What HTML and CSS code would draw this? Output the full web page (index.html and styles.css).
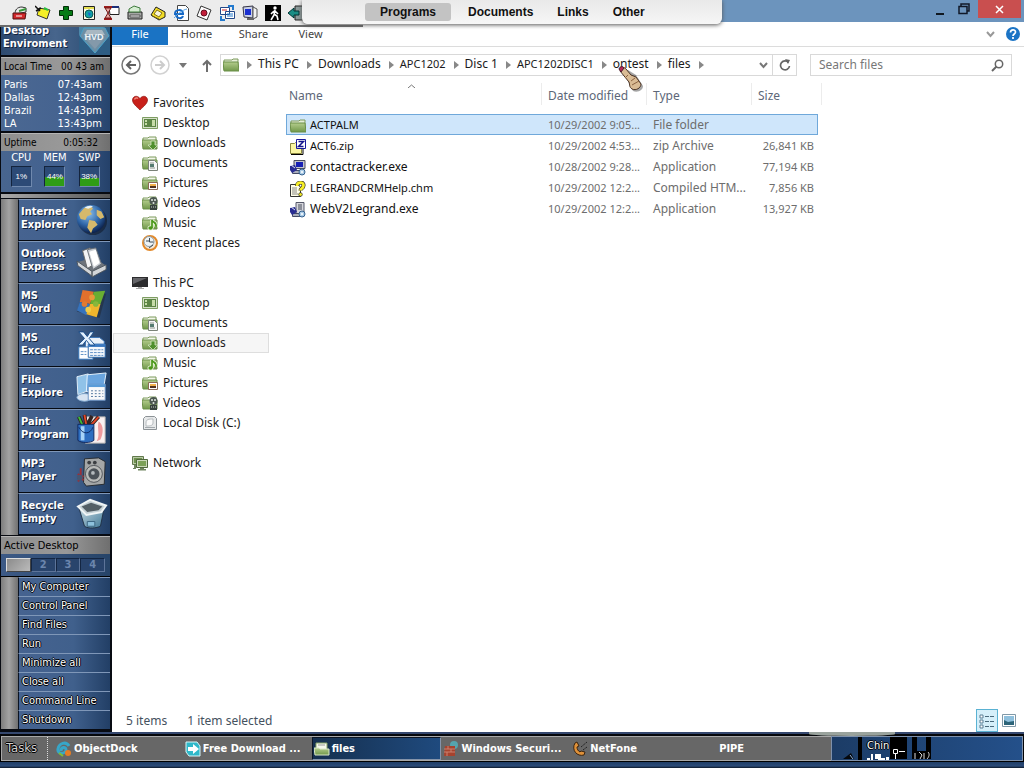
FILE: index.html
```html
<!DOCTYPE html>
<html lang="en">
<head>
	<meta charset="UTF-8">
	<title>files</title>
	<link rel="stylesheet" href="styles.css">
</head>
<body>
	<!-- shared icons -->
	<svg class="defs" aria-hidden="true">
		<defs>
			<linearGradient id="green" x1="0" y1="0" x2="0" y2="1"><stop offset="0" stop-color="#b3cc8c"/><stop offset="1" stop-color="#71984a"/></linearGradient>
			<linearGradient id="steel" x1="0" y1="0" x2="1" y2="1"><stop offset="0" stop-color="#c8dbe4"/><stop offset="1" stop-color="#3f7896"/></linearGradient>
			<radialGradient id="sea" cx=".4" cy=".3" r=".7"><stop offset="0" stop-color="#8fc4ee"/><stop offset=".6" stop-color="#2f66a8"/><stop offset="1" stop-color="#0d2450"/></radialGradient>
		</defs>
		<symbol id="i-folder" viewBox="0 0 16 16"><path d="M1 3h8l1-1h5v11H1z" fill="#e6efd8" stroke="#7c9a5c"/><path d="M0 5h15l1 9H1z" fill="url(#green)" stroke="#6b8f48"/></symbol>
		<symbol id="i-base" viewBox="0 0 16 16"><path d="M1 3h5l1-1h7v4H1z" fill="#f2f6ea" stroke="#7c9a5c"/><path d="M0 5h15v9H1z" fill="url(#green)" stroke="#6b8f48"/></symbol>
		<symbol id="i-desktop" viewBox="0 0 16 16"><path d="M.5 2.500h15v11H.5z" fill="#d5e0c8" stroke="#7e9d62"/><path d="M2 4h12v8H2z" fill="#5d8545"/><path d="M3 5h2v2H3zM3 8h2v2H3zM10 5h3v6h-3z" fill="#c7dca8"/></symbol>
		<symbol id="i-downloads" viewBox="0 0 16 16"><use href="#i-base"/><path d="M9 6h4v4h3l-5 5-5-5h3z" fill="#4f8f2c" stroke="#d7e8c4" stroke-width=".8"/></symbol>
		<symbol id="i-documents" viewBox="0 0 16 16"><use href="#i-base"/><path d="M6.500 5.500h6l3 3v7h-9z" fill="#f7f7f7" stroke="#7a8278"/><path d="M8 8h4M8 13h5" stroke="#8a938a"/><path d="M8 9h4v3H8z" fill="#557a70"/></symbol>
		<symbol id="i-pictures" viewBox="0 0 16 16"><use href="#i-base"/><path d="M6.500 7.500h9v7h-9z" fill="#fff" stroke="#8a6b55"/><path d="M8 9h6v2H8z" fill="#f1b04a"/><path d="M8 11h6v2H8z" fill="#50311f"/></symbol>
		<symbol id="i-videos" viewBox="0 0 16 16"><use href="#i-base"/><circle cx="11.500" cy="6" r="4" fill="#4b5750"/><circle cx="10" cy="5" r="1" fill="#dfe5df"/><circle cx="13" cy="5" r="1" fill="#dfe5df"/><circle cx="11.500" cy="8" r="1" fill="#dfe5df"/><path d="M8 10h7v5H8z" fill="#37423c"/><path d="M9 12h5" stroke="#c5d0c5" stroke-dasharray="1 1"/></symbol>
		<symbol id="i-music" viewBox="0 0 16 16"><use href="#i-base"/><path d="M10 5c1 3 5 2 4 7M10 5v8" fill="none" stroke="#eaf5dc" stroke-width="3.500"/><ellipse cx="8.500" cy="13" rx="3" ry="2.500" fill="#eaf5dc"/><path d="M10 5c1 3 5 2 4 7M10 5v8" fill="none" stroke="#4a981a" stroke-width="1.700"/><ellipse cx="8.500" cy="13" rx="2.200" ry="1.700" fill="#4a981a"/></symbol>
		<symbol id="i-recent" viewBox="0 0 16 16"><circle cx="8" cy="8" r="7" fill="#f4e9d9" stroke="#e2892a" stroke-width="2"/><circle cx="7" cy="6.500" r="5" fill="#eef3f5" stroke="#8b9ba5"/><path d="M7.500 3v4h4M11 10l-4 3M4 6h3" stroke="#3c4a55" fill="none"/></symbol>
		<symbol id="i-pc" viewBox="0 0 16 16"><path d="M0 2h16v10H0z" fill="#2c2c2e"/><path d="M1 3h14L1 9z" fill="#66666a"/><path d="M6 12h4v1h2v1H4v-1h2z" fill="#aaa"/></symbol>
		<symbol id="i-heart" viewBox="0 0 16 16"><path d="M8 15C4 11 .5 8.500.5 5S5-.5 8 3.500C11-.5 15.500 1.500 15.500 5S12 11 8 15z" fill="#c8201a" stroke="#8f1712" stroke-width=".7"/><path d="M2.500 4.500C3 3 5 2.500 6 3.500" stroke="#f08a7c" fill="none" stroke-width="1.500"/></symbol>
		<symbol id="i-disk" viewBox="0 0 16 16"><path d="M1.500 3.500l2-2h9l2 2v11h-13z" fill="#e6e8e9" stroke="#8c9296"/><path d="M4 8c0-4 3-4 7-4v4c0 3-4 3-7 3z" fill="#fafafa" stroke="#b6bbbe"/><path d="M3 12.500h10" stroke="#a2a8ac"/></symbol>
		<symbol id="i-network" viewBox="0 0 16 16"><path d="M.5 1.500h11v8H.5z" fill="#b9c9a6" stroke="#61794c"/><path d="M2 3h8v5H2z" fill="#6f9150"/><path d="M2 10h2v4H1v-1h1z" fill="#708560"/><path d="M4.500 4.500h11v8h-11z" fill="#cbd8ba" stroke="#4f683c"/><path d="M6 6h8v5H6z" fill="#7ca158"/><path d="M8 13h4v1h2v1.500H6V14h2z" fill="#708560"/></symbol>
		<symbol id="i-zip" viewBox="0 0 16 16"><path d="M.5 4.500h4l1-1h6v11H.5z" fill="#fbf7a2" stroke="#8b8740"/><path d="M1 15.500h12v-7" stroke="#000" fill="none"/><path d="M6.500.5h9v9h-9z" fill="#fff" stroke="#1a1a9c"/><path d="M8.500 2.500h5l-5 5h5" fill="none" stroke="#14148c" stroke-width="1.500"/></symbol>
		<symbol id="i-setup" viewBox="0 0 16 16"><path d="M4 .5h11v8H4z" fill="#c4c6ce" stroke="#4c4f60"/><path d="M6 2h7v5H6z" fill="#1720b4"/><path d="M2.500 10.500h9v3h-9z" fill="#aaaebc" stroke="#444a66"/><path d="M0 6l5-1 2 5-5 3-2-3z" fill="#292d92"/><path d="M1 5l4 3" stroke="#dadff5"/><circle cx="12" cy="12" r="3" fill="#aacbe6" stroke="#35618f"/><circle cx="12" cy="12" r="1" fill="#fff"/></symbol>
		<symbol id="i-setup2" viewBox="0 0 16 16"><path d="M6 .5h8v11H6z" fill="#d6d6dc" stroke="#55586a"/><path d="M8 3h4M8 5h4M8 7h4" stroke="#444a58"/><path d="M2.500 11.500h8v3h-8z" fill="#aaaebc" stroke="#444a66"/><path d="M0 6l5-1 2 5-5 3-2-3z" fill="#292d92"/><path d="M1 5l4 3" stroke="#dadff5"/><circle cx="12" cy="12" r="3" fill="#aacbe6" stroke="#35618f"/><circle cx="12" cy="12" r="1" fill="#fff"/></symbol>
		<symbol id="i-help" viewBox="0 0 16 16"><path d="M.5 3.500h8l2 3v9H.5z" fill="#fffde8" stroke="#333"/><path d="M2 7h5M2 9h5M2 11h5M2 13h6" stroke="#888"/><path d="M7 5c0-4.500 7-4.500 6.500-.500 0 3-3 2.500-3 5" fill="none" stroke="#222" stroke-width="4"/><path d="M7 5c0-4.500 7-4.500 6.500-.500 0 3-3 2.500-3 5" fill="none" stroke="#f7ee27" stroke-width="2.800"/><circle cx="10.500" cy="13.500" r="1.800" fill="#f7ee27" stroke="#222" stroke-width=".7"/></symbol>
		<symbol id="i-arrow" viewBox="0 0 5 8"><path d="M0 0l5 4-5 4z" fill="#888"/></symbol>
		<symbol id="i-chevron" viewBox="0 0 9 7"><path d="M1 1l3.500 4L8 1" fill="none" stroke="currentColor" stroke-width="2"/></symbol>
	</svg>

	<div class="desktop">
		<aside class="panel">
			<header class="brand">
				<h1>Desktop<br>Enviroment</h1>
				<svg width="31" height="31" viewBox="0 0 31 31"><path d="M0 0h31v31H0z" fill="#2e5d84"/><path d="M0 0h31L24 4H6L0 12z" fill="#4d88aa"/><path d="M5 4h21l4 8-14 17L1 12z" fill="#6d8fa5" stroke="#4aa2c8"/><path d="M8 6h15l3 5H5z" fill="#a9b8c2"/><path d="M6 14h19l-9 11z" fill="#8499aa"/><text x="15" y="16" text-anchor="middle" class="hvd">HVD</text></svg>
			</header>
			<div class="bar"><span>Local Time</span><span>00 43 am</span></div>
			<dl class="clocks">
				<dt>Paris</dt><dd>07:43am</dd>
				<dt>Dallas</dt><dd>12:43pm</dd>
				<dt>Brazil</dt><dd>14:43pm</dd>
				<dt>LA</dt><dd>13:43pm</dd>
			</dl>
			<div class="bar uptime"><span>Uptime</span><span>0:05:32</span></div>
			<div class="meters">
				<div>CPU<b>1%</b></div>
				<div>MEM<b class="half">44%</b></div>
				<div>SWP<b class="third">38%</b></div>
			</div>
			<div class="strip"></div>
			<nav class="launch">
				<button>Internet<br>Explorer
					<svg viewBox="0 0 34 34"><circle cx="18" cy="18" r="15" fill="#101b2c" opacity=".6"/><circle cx="16" cy="16" r="15" fill="url(#sea)"/><path d="M8 5c5-4 9-2 10 0l-3 3 2 3-5 2-2 4-5-1-2-5zM14 17l6 1 3 4-5 4-2 5-4-6zM22 6l5 2 3 6-4 2-4-4z" fill="#d5b96c"/><path d="M9 4c3-2 7-3 9-1l-5 2z" fill="#e8f1f5"/></svg>
				</button>
				<button>Outlook<br>Express
					<svg viewBox="0 0 34 34"><path d="M2 17L19 12l13 9-16 11z" fill="#6d737b"/><path d="M7 5l8-3 5 17-8 5z" fill="#f3f4f5" stroke="#666"/><path d="M12 4l9-2 6 17-9 6z" fill="#c9cdd2" stroke="#6a7078"/><path d="M14 6l7-2 4 14-6 4z" fill="#fff"/><path d="M1 16l16 11v5L2 21zM17 27l15-7v5L17 33z" fill="#d2d5d8" stroke="#4e555d"/></svg>
				</button>
				<button>MS<br>Word
					<svg viewBox="0 0 34 34"><path d="M8 3l24 3-7 26L1 25z" fill="#222c38" opacity=".6"/><path d="M7 2l12 2-4 13-11-2z" fill="#e2702d"/><path d="M19 4l12-1-5 14-11 0z" fill="#69ae32"/><path d="M4 15l11 2-4 12L1 24z" fill="#3673bd"/><path d="M15 17h11l-4 14-11-3z" fill="#efb52d"/><circle cx="17" cy="10" r="3" fill="#e99a3a"/><circle cx="9" cy="17" r="3" fill="#e37a31"/><circle cx="21" cy="17" r="3" fill="#87b63c"/><circle cx="13" cy="23" r="3" fill="#f1cb4a"/></svg>
				</button>
				<button>MS<br>Excel
					<svg viewBox="0 0 34 34"><path d="M10 8h15l5 4v14H10z" fill="#eaf1f9" stroke="#3873b8"/><path d="M3 18h15v13H3z" fill="#fff" stroke="#3578bd"/><path d="M13 15h18v14H13z" fill="#f5f8fc" stroke="#2863a5"/><path d="M13 15h18v3H13z" fill="#3978c0"/><path d="M15 21h14M15 24h14M15 27h14M5 23h6M5 26h6" stroke="#578bc3" stroke-dasharray="3 1"/><path d="M3 2h5l4 5 3-5h4l-5 7 6 7h-5l-4-5-4 5H2l7-7z" fill="#e3f1ff" stroke="#164b87"/></svg>
				</button>
				<button>File<br>Explore
					<svg viewBox="0 0 34 34"><path d="M1 5l12-3v18L2 24z" fill="#90c2e8" stroke="#e5f1fa"/><path d="M12 3l20-2-3 18-18 2z" fill="#6aa5df" stroke="#eaf5ff"/><ellipse cx="9" cy="27" rx="8" ry="4" fill="#d9e4f2" stroke="#8db5da"/><path d="M13 13h18v17H13z" fill="#f9f9fa" stroke="#6c94c5"/><path d="M13 13h18v3H13z" fill="#5b9cd8"/><path d="M16 20h13M16 23h13M16 26h13" stroke="#4a709b" stroke-dasharray="2 2"/></svg>
				</button>
				<button>Paint<br>Program
					<svg viewBox="0 0 34 34"><path d="M10 3h21v28H10z" fill="#f8f0f0" stroke="#aaa"/><path d="M24 8c6 4 5 13 2 19l-4 2c4-7 0-13 2-21z" fill="#ee9a9d"/><path d="M3 3l4 9M9 1l2 11M17 2l-5 10M24 3L14 14" stroke="#312321" stroke-width="4"/><path d="M3 3l4 9" stroke="#3bba38" stroke-width="2"/><path d="M9 1l2 11M24 3L14 14" stroke="#e14528" stroke-width="2"/><path d="M2 11h17v17c-3 3-14 3-17 0z" fill="#2e6ec0" stroke="#10265d"/><path d="M5 13h4v15H5z" fill="#a8d4f8"/><path d="M3 14c4 8 12 8 15 0" fill="none" stroke="#0e2c66"/></svg>
				</button>
				<button>MP3<br>Player
					<svg viewBox="0 0 34 34"><path d="M9 3l15-1 7 4-1 24-19 2-3-4z" fill="#a4a6a6" stroke="#252a2e"/><circle cx="14" cy="7" r="2" fill="#3b3e42"/><circle cx="20" cy="7" r="2" fill="#3b3e42"/><circle cx="19" cy="19" r="9" fill="#b9bab8" stroke="#50545a"/><circle cx="19" cy="19" r="6" fill="#4b5157"/><circle cx="18" cy="18" r="2" fill="#b5babd"/><path d="M5 13v9M2 19l6 7M2 27l6-6" stroke="#9c3037" stroke-width="2"/><circle cx="4" cy="23" r="3" fill="#455773"/></svg>
				</button>
				<button>Recycle<br>Empty
					<svg viewBox="0 0 34 34"><path d="M3 10l6 20c4 3 13 2 17 0l4-20z" fill="url(#steel)" stroke="#203044"/><path d="M2 9l13-7 17 6-5 7-16 3z" fill="#c4d0d5" stroke="#f0f5f6" stroke-width="2"/><path d="M6 9l10-4 12 4-4 4-12 2z" fill="#535f66"/><path d="M12 25h8v5h-8z" fill="#8ec2dd" stroke="#3b6480"/></svg>
				</button>
			</nav>
			<div class="bar active-desktop">Active Desktop</div>
			<div class="pager"><button class="on" aria-label="1"></button><button>2</button><button>3</button><button>4</button></div>
			<nav class="commands">
				<button>My Computer</button>
				<button>Control Panel</button>
				<button>Find Files</button>
				<button>Run</button>
				<button>Minimize all</button>
				<button>Close all</button>
				<button>Command Line</button>
				<button>Shutdown</button>
			</nav>
		</aside>

		<main class="window">
			<div class="titlebar">
				<button aria-label="Minimize"><svg width="10" height="12"><path d="M1 11h8" stroke="#101820" stroke-width="2"/></svg></button>
				<button aria-label="Restore"><svg width="12" height="12"><path d="M3 3V1h8v7H9M1 3.500h8v7H1z" fill="none" stroke="#101828" stroke-width="1.500"/></svg></button>
				<button class="close" aria-label="Close"><svg width="9" height="9"><path d="M1 1l7 7M8 1L1 8" stroke="#fff" stroke-width="1.500"/></svg></button>
			</div>
			<div class="tabs">
				<a class="file" href="#">File</a>
				<a href="#">Home</a>
				<a href="#">Share</a>
				<a href="#">View</a>
				<svg class="fold" width="9" height="7"><use href="#i-chevron"/></svg>
				<svg width="14" height="14" viewBox="0 0 14 14"><circle cx="7" cy="7" r="7" fill="#1b74c5"/><path d="M4.500 5.500c0-3.500 5-3.500 5-.5 0 2-2.500 2-2.500 4M7 10v2" fill="none" stroke="#fff" stroke-width="1.700"/></svg>
			</div>
			<div class="address">
				<button aria-label="Back"><svg width="20" height="20"><circle cx="10" cy="10" r="9" fill="#fff" stroke="#777" stroke-width="1.500"/><path d="M15 10H6M10 6l-4 4 4 4" fill="none" stroke="#606060" stroke-width="2"/></svg></button>
				<button aria-label="Forward"><svg width="20" height="20"><circle cx="10" cy="10" r="9" fill="#fff" stroke="#d2d2d2" stroke-width="1.500"/><path d="M5 10h9M10 6l4 4-4 4" fill="none" stroke="#ccc" stroke-width="2"/></svg></button>
				<button class="recent" aria-label="Recent locations"><svg width="8" height="5"><path d="M0 0h8L4 5z" fill="#777"/></svg></button>
				<button class="up" aria-label="Up"><svg width="10" height="13"><path d="M5 13V2M1 6l4-4 4 4" fill="none" stroke="#6e6e6e" stroke-width="2"/></svg></button>
				<div class="path">
					<svg width="16" height="16"><use href="#i-folder"/></svg>
					<svg class="sep"><use href="#i-arrow"/></svg><a href="#">This PC</a>
					<svg class="sep"><use href="#i-arrow"/></svg><a href="#">Downloads</a>
					<svg class="sep"><use href="#i-arrow"/></svg><a class="caps" href="#">APC1202</a>
					<svg class="sep"><use href="#i-arrow"/></svg><a href="#">Disc 1</a>
					<svg class="sep"><use href="#i-arrow"/></svg><a class="caps" href="#">APC1202DISC1</a>
					<svg class="sep"><use href="#i-arrow"/></svg><a href="#">ontest</a>
					<svg class="sep"><use href="#i-arrow"/></svg><a href="#">files</a>
					<svg class="sep"><use href="#i-arrow"/></svg>
					<button class="drop" aria-label="Previous locations"><svg width="9" height="7"><use href="#i-chevron"/></svg></button>
					<button class="refresh" aria-label="Refresh"><svg width="12" height="12"><path d="M9.500 3.500A4.500 4.500 0 1 0 10.500 7" fill="none" stroke="#666" stroke-width="1.700"/><path d="M6 0l5 1-2 4z" fill="#666"/></svg></button>
				</div>
				<div class="search">
					<input type="text" placeholder="Search files" aria-label="Search files">
					<svg width="13" height="13"><circle cx="8" cy="5" r="3.700" fill="none" stroke="#666" stroke-width="1.500"/><path d="M5.500 7.500L1 12" stroke="#666" stroke-width="2"/></svg>
				</div>
			</div>
			<div class="content">
				<nav class="tree">
					<ul>
						<li class="root"><a href="#"><svg><use href="#i-heart"/></svg>Favorites</a></li>
						<li><a href="#"><svg><use href="#i-desktop"/></svg>Desktop</a></li>
						<li><a href="#"><svg><use href="#i-downloads"/></svg>Downloads</a></li>
						<li><a href="#"><svg><use href="#i-documents"/></svg>Documents</a></li>
						<li><a href="#"><svg><use href="#i-pictures"/></svg>Pictures</a></li>
						<li><a href="#"><svg><use href="#i-videos"/></svg>Videos</a></li>
						<li><a href="#"><svg><use href="#i-music"/></svg>Music</a></li>
						<li><a href="#"><svg><use href="#i-recent"/></svg>Recent places</a></li>
					</ul>
					<ul>
						<li class="root"><a href="#"><svg><use href="#i-pc"/></svg>This PC</a></li>
						<li><a href="#"><svg><use href="#i-desktop"/></svg>Desktop</a></li>
						<li><a href="#"><svg><use href="#i-documents"/></svg>Documents</a></li>
						<li class="selected"><a href="#"><svg><use href="#i-downloads"/></svg>Downloads</a></li>
						<li><a href="#"><svg><use href="#i-music"/></svg>Music</a></li>
						<li><a href="#"><svg><use href="#i-pictures"/></svg>Pictures</a></li>
						<li><a href="#"><svg><use href="#i-videos"/></svg>Videos</a></li>
						<li><a href="#"><svg><use href="#i-disk"/></svg>Local Disk (C:)</a></li>
					</ul>
					<ul>
						<li class="root"><a href="#"><svg><use href="#i-network"/></svg>Network</a></li>
					</ul>
				</nav>
				<div class="list">
					<table>
						<thead>
							<tr>
								<th class="name">Name<svg class="sort" width="7" height="4"><path d="M0 4l3.500-3L7 4" fill="none" stroke="#777"/></svg></th>
								<th class="date">Date modified</th>
								<th class="type">Type</th>
								<th class="size">Size</th>
								<th class="end"></th>
							</tr>
						</thead>
						<tbody>
							<tr class="selected"><td class="caps"><svg><use href="#i-folder"/></svg>ACTPALM</td><td>10/29/2002 9:05...</td><td>File folder</td><td></td></tr>
							<tr><td class="caps"><svg><use href="#i-zip"/></svg>ACT6.zip</td><td>10/29/2002 4:53...</td><td>zip Archive</td><td>26,841 KB</td></tr>
							<tr><td><svg><use href="#i-setup"/></svg>contactracker.exe</td><td>10/28/2002 9:28...</td><td>Application</td><td>77,194 KB</td></tr>
							<tr><td class="caps"><svg><use href="#i-help"/></svg>LEGRANDCRMHelp.chm</td><td>10/29/2002 12:2...</td><td>Compiled HTM...</td><td>7,856 KB</td></tr>
							<tr><td><svg><use href="#i-setup2"/></svg>WebV2Legrand.exe</td><td>10/29/2002 12:2...</td><td>Application</td><td>13,927 KB</td></tr>
						</tbody>
					</table>
				</div>
			</div>
			<footer class="status">
				<span>5 items</span>
				<span>1 item selected</span>
				<button class="view on" aria-label="Details"><svg width="16" height="16"><path d="M1 2h3v3H1zM1 7h3v3H1zM1 12h3v3H1z" fill="#fff" stroke="#5a7f96"/><path d="M6 3.500h4M11 3.500h4M6 8.500h4M11 8.500h4M6 13.500h4M11 13.500h4" stroke="#49697c"/></svg></button>
				<button class="view" aria-label="Large icons"><svg width="14" height="13"><path d="M.5.5h13v12H.5z" fill="#fff" stroke="#8099a8"/><path d="M2 2h10v9H2z" fill="#8fc0dd"/><path d="M2 6l4 2 6-1v4H2z" fill="#2c6479"/></svg></button>
			</footer>
		</main>

		<footer class="taskbar">
			<div class="tasks">
				<span class="label">Tasks</span>
				<button><svg viewBox="0 0 16 16"><path d="M13 5C10 0 3 2 2 8s8 5 8 1-5-3-5 1" fill="none" stroke="#37a6c8" stroke-width="3"/><circle cx="12" cy="12" r="3" fill="#e57d26"/><path d="M3 12l4 3" stroke="#7dbd36" stroke-width="2"/></svg>ObjectDock</button>
				<button><svg viewBox="0 0 16 16"><path d="M1 1h11l3 4v10H4L1 11z" fill="#2fb8c9" stroke="#d9f6f8"/><path d="M3 6h5V3l6 5-6 5v-3H3z" fill="#fff"/></svg>Free Download ...</button>
				<button class="on"><svg viewBox="0 0 16 16"><path d="M2 2h11v7H2z" fill="#f5f8ec" stroke="#86a164"/><path d="M4 4h7" stroke="#999"/><path d="M0 7h5l1 1h9v6H1z" fill="url(#green)" stroke="#dbe8c8"/></svg>files</button>
				<button><svg viewBox="0 0 16 16"><circle cx="11" cy="4" r="4" fill="#55a4ae"/><path d="M2 5h10v10H1z" fill="#a7432e"/><path d="M1 8h11M1 11h11M5 5v3M8 8v3M4 11v4" stroke="#c98270"/></svg>Windows Securi...</button>
				<button><svg viewBox="0 0 16 16"><path d="M3 2C-1 9 5 16 12 14l1-3-4-1-1 1C6 10 5 8 5 6l2-1-2-4z" fill="#df9139" stroke="#3a2410"/><path d="M9 6l6-5M11 9l4-3" stroke="#222" stroke-dasharray="2 1"/></svg>NetFone</button>
				<button><svg viewBox="0 0 16 16"></svg>PIPE</button>
			</div>
			<div class="tray">
				<svg width="22" height="22"><path d="M7 22l8-6 3 6z" fill="#05080d"/><path d="M14 18l3 4" stroke="#8fb0d8"/></svg>
				<span class="lang">Chin
					<svg width="23" height="7"><path d="M4 0h2v7H4zM0 4h3v3H0zM8 0h6v4h4v3h-7V5H8zM19 3h3v4h-3z" fill="#fff"/></svg>
				</span>
				<svg class="dark" width="17" height="22"><path d="M3.500 12.500h4v4h-4zM5.500 17v5M9 14.500h6" fill="none" stroke="#fff"/></svg>
				<svg width="20" height="22"><path d="M0 0h5v14h9V0h5v22H0z" fill="#000"/><path d="M3 16v6M7 15l3 3-2 4M12 16v6M16 15c2 2 1 5-1 7" fill="none" stroke="#ddd"/></svg>
			</div>
			<div class="bump"></div>
		</footer>
	</div>

	<!-- quick launch strip over the top edge -->
	<div class="quick">
		<button><svg><path d="M3 9c0-4 2-7 7-7l4 1v4z" fill="#eee" stroke="#333"/><path d="M1 8h13l-1 6H1z" fill="#d0282a" stroke="#501010"/><path d="M7 6l7-2" stroke="#369a3a" stroke-width="2"/><path d="M4 11h6" stroke="#fff"/></svg></button>
		<button><svg><path d="M4 3l11 2-3 9-10-4z" fill="#f6f028" stroke="#333"/><path d="M0 1l5 5M1 6l5-3" stroke="#111" stroke-width="1.500"/><path d="M9 3l4 2" stroke="#2bc13c" stroke-width="2"/></svg></button>
		<button><svg><path d="M5.500 1.500h5v4h4v5h-4v4h-5v-4h-4v-5h4z" fill="#067c16" stroke="#022e07"/></svg></button>
		<button><svg><path d="M2.500 1.500h11v13h-11z" fill="#fdfbe4" stroke="#222"/><path d="M3 2h10v2H3z" fill="#e5de50"/><circle cx="8" cy="9" r="4" fill="#12a3a6" stroke="#155"/><path d="M7 7l3 2-2 2z" fill="#185bd5"/></svg></button>
		<button><svg><path d="M5 2.500h10v7H6z" fill="#fff" stroke="#222"/><path d="M5 1h10v2H5z" fill="#1c2f78"/><path d="M0 2h8M0 14h8" stroke="#9c1b1b" stroke-width="2"/><path d="M1 3h6L4 8l3 5H1l3-5z" fill="#e9a9a3" stroke="#731a1a"/></svg></button>
		<button><svg><path d="M1 7h14v7H1z" fill="#a5a7a5" stroke="#222"/><path d="M2 7V4l5-3 6 2v4z" fill="#d6edd2" stroke="#3e7a3c"/><path d="M3 10h10v2H3z" fill="#efefef" stroke="#555"/></svg></button>
		<button><svg><path d="M1 10L6 2l9 5v5l-6 3z" fill="#f2dc26" stroke="#222"/><path d="M4 9l3-4 5 3-3 4z" fill="#f7f4da" stroke="#8a7610"/><path d="M2 11l7 3" stroke="#6d5f17"/></svg></button>
		<button><svg><path d="M4.500.5h8l3 3v12h-11z" fill="#fff" stroke="#444"/><path d="M11 9H2c0-5 7-5 8-1M3 10c1 4 6 4 7 1" fill="none" stroke="#1568c6" stroke-width="2"/><path d="M1 13C5 9 9 5 14 4" fill="none" stroke="#59a5e5"/></svg></button>
		<button><svg><path d="M5 1l10 4-4 10L1 11z" fill="#fff" stroke="#333"/><circle cx="8" cy="8" r="3" fill="#c41e3a" stroke="#641020"/></svg></button>
		<button><svg><path d="M1.500 2.500h9v7h-9zM6.500 6.500h9v7h-9z" fill="#fff" stroke="#234889"/><path d="M3 5h5" stroke="#c22"/><path d="M8 9h6M8 11h6" stroke="#237ace"/><path d="M9 1h5v4M6 15H2v-4" fill="none" stroke="#237ace" stroke-width="2"/></svg></button>
		<button><svg><path d="M1 2l10-1v12L2 12z" fill="#c9d0e6" stroke="#334"/><path d="M3 4h6v6H3z" fill="#1a2fd0"/><path d="M11 2l4 2v8l-4 2z" fill="#f2f2f2" stroke="#555"/><path d="M5 14h7" stroke="#666" stroke-width="2"/></svg></button>
		<button><svg><path d="M0 0h16v16H0z" fill="#000"/><circle cx="10" cy="3" r="1.700" fill="#fff"/><path d="M10 5l-1 5-3 5M9 9l3 2 1 4M9 6L6 9M10 6l3 3" stroke="#fff" stroke-width="1.600" fill="none"/></svg></button>
		<button><svg><path d="M7 1h8v14H7z" fill="#8c9a9a" stroke="#222"/><path d="M0 8l6-5v3h5v4H6v3z" fill="#1a8d85" stroke="#033"/></svg></button>
	</div>
	<nav class="dock">
		<a class="on" href="#">Programs</a>
		<a href="#">Documents</a>
		<a href="#">Links</a>
		<a href="#">Other</a>
	</nav>
	<svg class="cursor" width="28" height="30" viewBox="0 0 28 30"><path d="M5 8l10 19c5 2 10-1 10-5l-7-11-8-5z" fill="#000" opacity=".35"/><path d="M2 7l2-3c2-1 3 0 4 1l5 6 5 2 5 7c0 4-5 7-9 5-3-2-2-4-3-7z" fill="#d9bb94" stroke="#4b3426"/><path d="M1 5c1-3 4-3 5-1L3 8z" fill="#b8285a" stroke="#4b1a2c"/><path d="M13 17l4-3M14 21l7-4M10 11l-3 3" stroke="#8b6241"/></svg>
</body>
</html>
```
FILE: styles.css
```css
*{
	box-sizing: border-box;
}

body{
	margin: 0;
	min-height: 100vh;
	overflow: hidden;
	font: 12px/20px "Noto Sans", "Open Sans", sans-serif;
	color: #1b1b1b;
}

a{
	color: inherit;
	text-decoration: none;
}

button{
	padding: 0;
	border: 0;
	background: none;
	font: inherit;
	color: inherit;
}

.defs{
	position: absolute;
	width: 0;
	height: 0;
}

.desktop{
	display: grid;
	grid-template-columns: 112px 1fr;
	grid-template-rows: 1fr 36px;
	min-height: 100vh;
}

/* left panel */
.panel{
	display: flex;
	flex-direction: column;
	padding: 0 2px 0 1px;
	background: #080b12;
	color: #fff;
	font: 11px/13px "DejaVu Sans Condensed", "DejaVu Sans", sans-serif;
}

.brand{
	display: flex;
	justify-content: space-between;
	align-items: flex-end;
	height: 55px;
	padding: 0 0 0 2px;
	background: linear-gradient(90deg, #2d4a70, #47658c 50%, #24466c);
}

.brand h1{
	margin: 0 0 5px;
	font: bold 11px/13px "DejaVu Sans Condensed", "DejaVu Sans", sans-serif;
	text-shadow: 1px 1px #14233c;
}

.hvd{
	font: bold 9px "Liberation Sans", sans-serif;
	fill: #eef4f8;
}

.bar{
	display: flex;
	justify-content: space-between;
	height: 18px;
	margin-top: 2px;
	padding: 0 6px 0 3px;
	border-top: 1px solid #b5b5b5;
	background: linear-gradient(90deg, #8f8f8f, #999 60%, #6f6f6f);
	font-size: 10px;
	line-height: 17px;
	white-space: nowrap;
	color: #000;
}

.uptime{
	padding-right: 12px;
}

.clocks{
	display: grid;
	grid-template-columns: 1fr auto;
	margin: 0;
	padding: 3px 8px 1px 3px;
	background: linear-gradient(90deg, #4b6892, #456390 60%, #26446d);
}

.clocks dd{
	margin: 0;
	text-align: right;
}

.meters{
	display: flex;
	justify-content: space-around;
	height: 41px;
	padding: 0 4px;
	background: linear-gradient(90deg, #48658f, #426190 60%, #24416a);
	text-align: center;
}

.meters b{
	display: block;
	width: 21px;
	height: 21px;
	margin: 2px auto 0;
	border: 1px solid;
	border-color: #14243d #7089ae #7089ae #14243d;
	background: #2c4a76;
	font: 8px/19px "Liberation Sans", sans-serif;
}

.meters .half{
	background: linear-gradient(#2c4a76 55%, #2f9c16 55%);
}

.meters .third{
	background: linear-gradient(#2c4a76 60%, #2f9c16 60%);
}

.strip{
	height: 4px;
	margin: 2px 0 1px;
	background: linear-gradient(90deg, #aaa, #555);
}

.launch,
.commands{
	padding-left: 17px;
	background: linear-gradient(90deg, #7d7d7d, #a3a3a3 8px, #707070 17px, #000 17px);
}

.launch button,
.commands button{
	display: flex;
	align-items: center;
	justify-content: space-between;
	width: 100%;
	border-left: 1px solid #0a1322;
	border-top: 1px solid #7f97b8;
	border-bottom: 1px solid #060a12;
	background: linear-gradient(90deg, #466390, #40608c 60%, #223f66);
	text-align: left;
}

.launch button{
	height: 42px;
	padding: 0 2px 4px;
	font-weight: bold;
	text-shadow: 1px 1px #101e36;
}

.launch svg{
	flex: none;
	width: 32px;
	height: 32px;
	margin-top: 4px;
	margin-left: -12px;
}

.active-desktop{
	margin-top: 1px;
	font-size: 11px;
}

.pager{
	display: flex;
	height: 22px;
	padding: 4px 5px;
	background: linear-gradient(90deg, #3d5a86, #274468);
}

.pager button{
	flex: 1;
	border: 1px solid;
	border-color: #142642 #5d7499 #5d7499 #142642;
	background: #29446c;
	font-weight: bold;
	line-height: 12px;
	color: #6c86ad;
}

.pager .on{
	border-color: #ddd #444 #444 #ddd;
	background: linear-gradient(135deg, #8b8b8b, #bbb);
}

.commands{
	border-top: 1px solid #000;
}

.commands button{
	height: 19px;
	padding-left: 3px;
	border-bottom: 0;
	line-height: 18px;
}

.commands button,
.taskbar{
	text-shadow: 1px 0 #000, -1px 0 #000, 0 1px #000, 0 -1px #000;
}

/* explorer window */
.window{
	display: flex;
	flex-direction: column;
	min-width: 0;
	background: #fff;
}

.titlebar{
	display: flex;
	justify-content: flex-end;
	height: 22px;
	background: #6c94bd;
}

.titlebar button{
	width: 24px;
	padding-bottom: 4px;
	line-height: 0;
}

.titlebar .close{
	width: 43px;
	height: 18px;
	margin: 0 3px 0 2px;
	padding: 0;
	background: #c94f4f;
}

.tabs{
	display: flex;
	align-items: center;
	height: 25px;
	padding-right: 4px;
	border-bottom: 1px solid #dcdcdc;
	font-size: 11px;
	color: #444;
}

.tabs a{
	width: 57px;
	text-align: center;
}

.tabs .file{
	align-self: stretch;
	width: 56px;
	margin-bottom: 1px;
	background: #1a73c4;
	line-height: 24px;
	color: #fff;
}

.fold{
	margin: 0 11px 0 auto;
	color: #999;
}

.address{
	display: flex;
	align-items: center;
	height: 36px;
	padding: 0 12px 0 9px;
}

.address button{
	display: flex;
	align-items: center;
	justify-content: center;
}

.address > button{
	width: 20px;
	margin-right: 9px;
}

.address .recent{
	width: 8px;
	margin-right: 15px;
}

.address .up{
	width: 10px;
	margin-right: 8px;
}

.path,
.search{
	display: flex;
	align-items: center;
	height: 22px;
	border: 1px solid #d9d9d9;
	background: #fff;
}

.path{
	flex: 1;
	min-width: 0;
	padding-left: 2px;
	white-space: nowrap;
}

.path a{
	padding-bottom: 2px;
}

.path .caps{
	font-size: 11px;
}

.sep{
	flex: none;
	width: 5px;
	height: 8px;
	margin: 0 6px 0 8px;
}

.path .drop{
	width: 18px;
	margin-left: auto;
	color: #777;
}

.path .refresh{
	width: 24px;
	height: 20px;
	border-left: 1px solid #d9d9d9;
}

.search{
	width: 202px;
	margin-left: 13px;
	padding: 0 7px 0 8px;
}

.search input{
	flex: 1;
	min-width: 0;
	padding: 0;
	border: 0;
	outline: 0;
	background: none;
	font: inherit;
}

.search input::placeholder{
	color: #777;
	opacity: 1;
}

.content{
	display: flex;
	flex: 1;
}

.tree{
	width: 157px;
	padding: 10px 0 0 1px;
}

.tree ul{
	margin: 0 0 20px;
	padding: 0;
	list-style: none;
}

.tree a{
	display: flex;
	align-items: center;
	height: 20px;
	padding-left: 28px;
	border: 1px solid transparent;
}

.tree .root a{
	padding-left: 18px;
}

.tree .selected a{
	border-color: #dedede;
	background: #f6f6f6;
}

.tree svg{
	width: 16px;
	height: 16px;
	margin-right: 5px;
}

.list{
	flex: 1;
	padding: 0 0 0 17px;
}

table{
	width: 536px;
	border-collapse: separate;
	border-spacing: 0;
	table-layout: fixed;
	white-space: nowrap;
}

th{
	position: relative;
	height: 20px;
	padding: 4px 0 0 6px;
	border-right: 1px solid #ececec;
	font-weight: normal;
	line-height: 18px;
	text-align: left;
	color: #5d6778;
}

.name{
	width: 256px;
	padding-left: 3px;
}

.date,
.type{
	width: 105px;
}

.size{
	border-right: 0;
}

.end{
	width: 4px;
	padding: 0;
}

.sort{
	position: absolute;
	top: 1px;
	left: 122px;
}

thead::after{
	content: "";
	display: block;
	height: 9px;
}

td{
	height: 21px;
	padding: 0 0 0 6px;
	border: 0 solid #6fa8da;
	line-height: 19px;
	color: #6d6d6d;
}

td:first-child{
	padding-left: 4px;
	color: #111;
}

td svg{
	width: 16px;
	height: 16px;
	margin-right: 4px;
	vertical-align: middle;
}

td:nth-child(2),
td:nth-child(4),
td.caps{
	font-size: 11px;
}

td:nth-child(4){
	padding: 0 4px 0 0;
	text-align: right;
}

.list .selected td{
	border-width: 1px 0;
	background: #cfe6fb;
}

.list .selected td:first-child{
	padding-left: 3px;
	border-left-width: 1px;
}

.list .selected td:last-child{
	border-right-width: 1px;
}

.status{
	display: flex;
	align-items: center;
	height: 23px;
	padding: 0 4px 0 14px;
	color: #44515e;
}

.status span{
	margin-right: 20px;
}

.view{
	width: 22px;
	height: 23px;
	line-height: 0;
}

.view.on{
	margin-left: auto;
	border: 1px solid #5ab2d3;
	background: #d5effa;
}

/* taskbar */
.taskbar{
	position: relative;
	grid-column: 1 / 3;
	display: flex;
	padding: 4px 1px 7px;
	border-top: 2px solid #35486f;
	background: linear-gradient(#05070b 3px, #000 28px, #1f3d66 28px, #2b4b78 32px, #0c1728);
	color: #fff;
	font: bold 11px/22px "DejaVu Sans Condensed", "DejaVu Sans", sans-serif;
}

.tasks{
	display: flex;
	flex: 1;
	margin-top: -2px;
	padding-right: 3px;
	border: 1px solid #a8a8a8;
	border-right: 0;
	background: #676767;
}

.label{
	width: 46px;
	margin-right: 6px;
	padding-left: 4px;
	border-right: 1px dotted #ddd;
	font-size: 13px;
	font-weight: normal;
	color: #d0d0d0;
}

.tasks button{
	display: flex;
	flex: 1 1 0;
	align-items: center;
	min-width: 0;
	padding-left: 2px;
	white-space: nowrap;
}

.tasks button svg{
	flex: none;
	width: 16px;
	height: 16px;
	margin-right: 2px;
}

.tasks .on{
	padding-left: 1px;
	border: 1px solid #8594aa;
	border-top-color: #0c1626;
	border-left-color: #0c1626;
	background: linear-gradient(90deg, #16304f, #1f4a7e);
}

.tray{
	display: flex;
	width: 192px;
	margin-top: -2px;
	padding-left: 4px;
	border: 1px solid #7f91ab;
	background: linear-gradient(90deg, #1c3c66, #24508a);
	overflow: hidden;
}

.lang{
	width: 32px;
	padding-left: 5px;
	border-left: 4px solid #000;
	font-size: 11px;
	font-weight: normal;
	line-height: 17px;
}

.lang svg{
	display: block;
}

.dark{
	margin-right: 5px;
	background: #000;
}

.bump{
	position: absolute;
	top: -2px;
	right: 129px;
	width: 86px;
	height: 4px;
	border-radius: 0 0 50% 50%;
	background: #9aa39d;
}

/* strips over the top edge */
.quick{
	position: absolute;
	top: 0;
	left: 0;
	display: flex;
	width: 363px;
	height: 27px;
	padding: 5px 0 0 12px;
	border-bottom: 2px solid #6a6a6a;
	background: #ececec;
}

.quick button{
	width: 23px;
	height: 16px;
	text-align: left;
	line-height: 0;
}

.quick svg{
	width: 16px;
	height: 16px;
}

.dock{
	position: absolute;
	top: 0;
	left: 302px;
	display: flex;
	align-items: flex-start;
	width: 420px;
	height: 24px;
	padding: 3px 0 0 63px;
	border-radius: 0 0 6px 6px;
	background: linear-gradient(#e9e9e9, #f6f6f6);
	box-shadow: 0 1px 4px #555;
	font: bold 12px/18px "Liberation Sans", sans-serif;
	color: #111;
}

.dock a{
	margin-right: 24px;
}

.dock .on{
	width: 86px;
	margin-right: 17px;
	border-radius: 3px;
	background: #c3c3c3;
	text-align: center;
}

.cursor{
	position: absolute;
	top: 64px;
	left: 618px;
}
```
